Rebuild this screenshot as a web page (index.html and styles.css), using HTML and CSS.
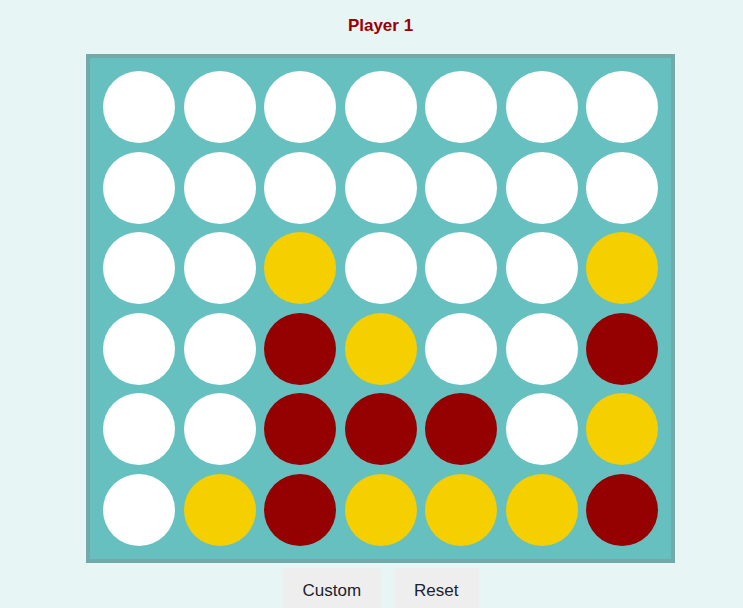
FILE: index.html
```html
<!DOCTYPE html>
<html>
<head>
<meta charset="utf-8">
<link rel="stylesheet" href="styles.css">
</head>
<body>
<div class="page">
  <h1 class="title">Player 1</h1>
  <div class="board">
    <div class="cell"></div><div class="cell"></div><div class="cell"></div><div class="cell"></div><div class="cell"></div><div class="cell"></div><div class="cell"></div>
    <div class="cell"></div><div class="cell"></div><div class="cell"></div><div class="cell"></div><div class="cell"></div><div class="cell"></div><div class="cell"></div>
    <div class="cell"></div><div class="cell"></div><div class="cell yellow"></div><div class="cell"></div><div class="cell"></div><div class="cell"></div><div class="cell yellow"></div>
    <div class="cell"></div><div class="cell"></div><div class="cell red"></div><div class="cell yellow"></div><div class="cell"></div><div class="cell"></div><div class="cell red"></div>
    <div class="cell"></div><div class="cell"></div><div class="cell red"></div><div class="cell red"></div><div class="cell red"></div><div class="cell"></div><div class="cell yellow"></div>
    <div class="cell"></div><div class="cell yellow"></div><div class="cell red"></div><div class="cell yellow"></div><div class="cell yellow"></div><div class="cell yellow"></div><div class="cell red"></div>
  </div>
  <div class="controls">
    <button class="btn">Custom</button>
    <button class="btn">Reset</button>
  </div>
</div>
</body>
</html>
```

FILE: styles.css
```css
html, body {
  margin: 0;
  padding: 0;
  background: #e8f5f5;
  overflow: hidden;
}
.page {
  width: 743px;
  box-sizing: border-box;
  padding-left: 18px;
  display: flex;
  flex-direction: column;
  align-items: center;
  font-family: "Liberation Sans", Arial, sans-serif;
}
.title {
  margin: 16px 0 0 0;
  height: 38px;
  font-size: 17px;
  line-height: 20px;
  font-weight: bold;
  color: #990000;
}
.board {
  border: 4px solid #72a9ab;
  background: #66c0bf;
  padding: 13px;
  display: grid;
  grid-template-columns: repeat(7, 72px);
  grid-auto-rows: 72px;
  gap: 8.5px;
}
.cell {
  border-radius: 50%;
  background: #ffffff;
}
.cell.yellow { background: #f5cf00; }
.cell.red { background: #950000; }
.controls {
  margin-top: 5px;
  display: flex;
  gap: 13px;
}
.btn {
  font-family: "Liberation Sans", Arial, sans-serif;
  font-size: 17px;
  color: #1b2230;
  background: #eeeeee;
  border: none;
  border-radius: 4px;
  padding: 13px 20px 14px;
  line-height: 20px;
}
```
